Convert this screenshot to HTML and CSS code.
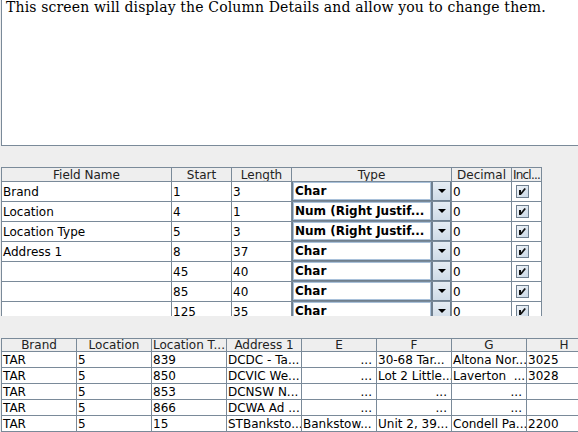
FILE: index.html
```html
<!DOCTYPE html>
<html>
<head>
<meta charset="utf-8">
<link rel="stylesheet" href="styles.css">
</head>
<body>
<div class="page">
  <div class="desc">This screen will display the Column Details and allow you to change them.</div>

  <div class="viewport top-vp">
    <div class="grid cols-top">
      <div class="th">Field Name</div><div class="th">Start</div><div class="th">Length</div><div class="th">Type</div><div class="th">Decimal</div><div class="th tight">Incl...</div>

      <div class="td">Brand</div><div class="td">1</div><div class="td">3</div>
      <div class="td combo-cell"><div class="combo"><div class="field">Char</div><div class="btn"><span class="tri"></span></div></div></div>
      <div class="td">0</div><div class="td chk-cell"><svg class="chk" width="13" height="13" viewBox="0 0 13 13"><use href="#cb"/></svg></div>

      <div class="td">Location</div><div class="td">4</div><div class="td">1</div>
      <div class="td combo-cell"><div class="combo"><div class="field">Num (Right Justif...</div><div class="btn"><span class="tri"></span></div></div></div>
      <div class="td">0</div><div class="td chk-cell"><svg class="chk" width="13" height="13" viewBox="0 0 13 13"><use href="#cb"/></svg></div>

      <div class="td">Location Type</div><div class="td">5</div><div class="td">3</div>
      <div class="td combo-cell"><div class="combo"><div class="field">Num (Right Justif...</div><div class="btn"><span class="tri"></span></div></div></div>
      <div class="td">0</div><div class="td chk-cell"><svg class="chk" width="13" height="13" viewBox="0 0 13 13"><use href="#cb"/></svg></div>

      <div class="td">Address 1</div><div class="td">8</div><div class="td">37</div>
      <div class="td combo-cell"><div class="combo"><div class="field">Char</div><div class="btn"><span class="tri"></span></div></div></div>
      <div class="td">0</div><div class="td chk-cell"><svg class="chk" width="13" height="13" viewBox="0 0 13 13"><use href="#cb"/></svg></div>

      <div class="td"></div><div class="td">45</div><div class="td">40</div>
      <div class="td combo-cell"><div class="combo"><div class="field">Char</div><div class="btn"><span class="tri"></span></div></div></div>
      <div class="td">0</div><div class="td chk-cell"><svg class="chk" width="13" height="13" viewBox="0 0 13 13"><use href="#cb"/></svg></div>

      <div class="td"></div><div class="td">85</div><div class="td">40</div>
      <div class="td combo-cell"><div class="combo"><div class="field">Char</div><div class="btn"><span class="tri"></span></div></div></div>
      <div class="td">0</div><div class="td chk-cell"><svg class="chk" width="13" height="13" viewBox="0 0 13 13"><use href="#cb"/></svg></div>

      <div class="td"></div><div class="td">125</div><div class="td">35</div>
      <div class="td combo-cell"><div class="combo"><div class="field">Char</div><div class="btn"><span class="tri"></span></div></div></div>
      <div class="td">0</div><div class="td chk-cell"><svg class="chk" width="13" height="13" viewBox="0 0 13 13"><use href="#cb"/></svg></div>
    </div>
  </div>

  <div class="viewport bottom-vp">
    <div class="grid cols-bottom">
      <div class="th">Brand</div><div class="th">Location</div><div class="th">Location T...</div><div class="th">Address 1</div><div class="th">E</div><div class="th">F</div><div class="th">G</div><div class="th">H</div>

      <div class="td">TAR</div><div class="td">5</div><div class="td">839</div><div class="td">DCDC - Ta...</div><div class="td dots">...</div><div class="td">30-68 Tar...</div><div class="td">Altona Nor...</div><div class="td">3025</div>
      <div class="td">TAR</div><div class="td">5</div><div class="td">850</div><div class="td">DCVIC We...</div><div class="td dots">...</div><div class="td">Lot 2 Little...</div><div class="td">Laverton&nbsp;&nbsp;...</div><div class="td">3028</div>
      <div class="td">TAR</div><div class="td">5</div><div class="td">853</div><div class="td">DCNSW N...</div><div class="td dots">...</div><div class="td dots">...</div><div class="td dots">...</div><div class="td"></div>
      <div class="td">TAR</div><div class="td">5</div><div class="td">866</div><div class="td">DCWA Ad ...</div><div class="td dots">...</div><div class="td dots">...</div><div class="td dots">...</div><div class="td"></div>
      <div class="td">TAR</div><div class="td">5</div><div class="td">15</div><div class="td">STBanksto...</div><div class="td">Bankstow...</div><div class="td">Unit 2, 39...</div><div class="td">Condell Pa...</div><div class="td">2200</div>
    </div>
  </div>
</div>

<svg width="0" height="0" class="defs">
  <defs>
    <linearGradient id="cbg" x1="0" y1="0" x2="1" y2="1">
      <stop offset="0" stop-color="#f2f6fa"/>
      <stop offset="1" stop-color="#c9d7e5"/>
    </linearGradient>
    <g id="cb">
      <rect x="0.5" y="0.5" width="12" height="12" fill="url(#cbg)" stroke="#6f7f8f"/>
      <rect x="3" y="5" width="2" height="5" fill="#111"/>
      <polygon points="8.5,3 9.5,3.5 9.5,4.5 5.5,9.5 4.5,9.5 4.5,8" fill="#111"/>
    </g>
  </defs>
</svg>
</body>
</html>
```

FILE: styles.css
```css
html, body {
  margin: 0;
  padding: 0;
  background: #eeeeee;
  overflow: hidden;
}

body {
  width: 578px;
  height: 432px;
  font-family: "DejaVu Sans", sans-serif;
  font-size: 12px;
  color: #000;
}

.page {
  width: 640px;
  display: flex;
  flex-direction: column;
}

.desc {
  height: 145px;
  margin-left: 1px;
  padding-left: 4px;
  background: #ffffff;
  border-left: 1px solid #7a8a99;
  border-bottom: 1px solid #7a8a99;
  font-family: "DejaVu Serif", serif;
  font-size: 14px;
  letter-spacing: 0.14px;
  line-height: 15px;
  color: #000;
}

.viewport {
  margin-left: 1px;
  overflow: hidden;
}

.top-vp {
  margin-top: 21px;
  height: 149px;
}

.bottom-vp {
  margin-top: 22px;
  height: 94px;
}

.grid {
  display: grid;
  width: max-content;
  border-left: 1px solid #7a8a99;
  border-top: 1px solid #7a8a99;
}

.cols-top {
  grid-template-columns: 170px 60px 60px 160px 60px 30px;
  grid-template-rows: 14px;
  grid-auto-rows: 20px;
}

.cols-bottom {
  grid-template-columns: repeat(8, 75px);
  grid-template-rows: 13px;
  grid-auto-rows: 16px;
}

.th, .td {
  box-sizing: border-box;
  border-right: 1px solid #7a8a99;
  border-bottom: 1px solid #7a8a99;
  white-space: nowrap;
  overflow: hidden;
  display: flex;
  align-items: center;
}

.th {
  justify-content: center;
  background: #eeeeee;
  color: #222;
  line-height: 12px;
}

.th.tight {
  justify-content: flex-start;
  padding-left: 1px;
  letter-spacing: -0.8px;
}

.td {
  background: #ffffff;
  padding-left: 1px;
  line-height: 14px;
}

.td.dots {
  justify-content: flex-end;
  padding-right: 4px;
}

.combo-cell {
  padding-left: 0;
  align-items: stretch;
}

.combo {
  flex: 1;
  display: flex;
  border-left: 1px solid #6f7f8f;
  border-bottom: 1px solid #6f7f8f;
  border-right: 1px solid #6f7f8f;
}

.field {
  flex: 1;
  box-sizing: border-box;
  background: #ffffff;
  border: 1px solid #a9c1da;
  font-weight: bold;
  padding-left: 1px;
  display: flex;
  align-items: center;
  overflow: hidden;
  white-space: nowrap;
}

.btn {
  width: 19px;
  box-sizing: border-box;
  border-left: 2px solid #6f7f8f;
  background: linear-gradient(#e6edf4, #cfdbe7);
  display: flex;
  align-items: center;
  justify-content: center;
}

.tri {
  width: 0;
  height: 0;
  border-left: 4px solid transparent;
  border-right: 4px solid transparent;
  border-top: 4px solid #000;
}

.chk-cell {
  padding-left: 4px;
}

.chk {
  display: block;
}

.defs {
  position: absolute;
  width: 0;
  height: 0;
}
```
